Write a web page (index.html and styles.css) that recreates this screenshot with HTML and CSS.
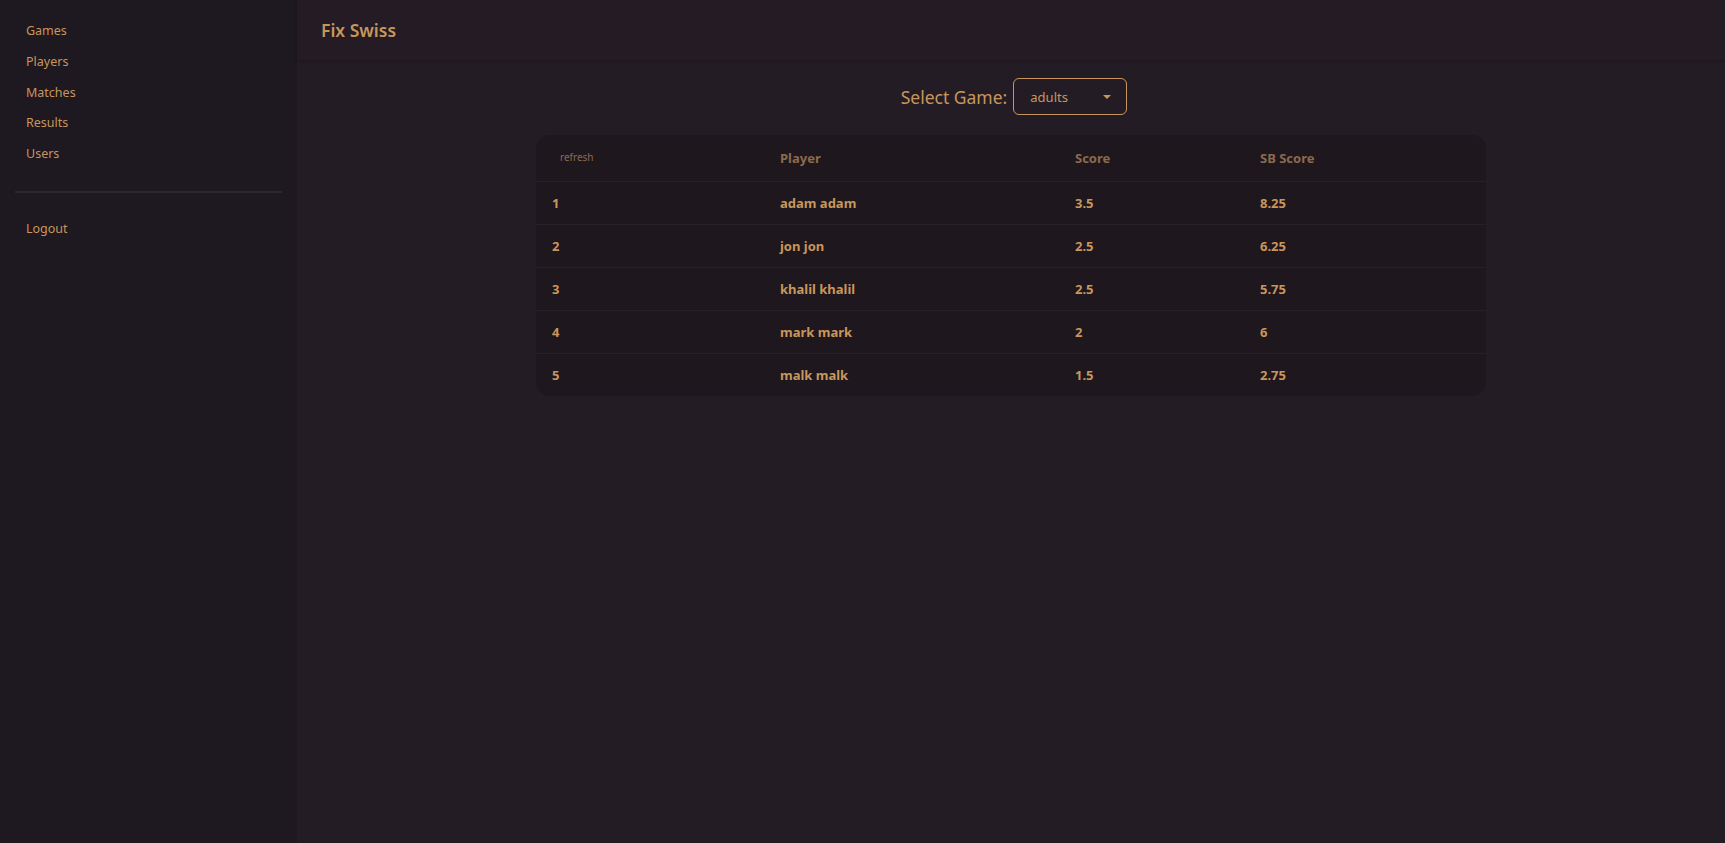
FILE: index.html
```html
<!DOCTYPE html>
<html>
<head>
<meta charset="utf-8">
<link rel="stylesheet" href="styles.css">
</head>
<body>
<div class="app">
  <aside class="sidebar">
    <nav class="nav">
      <a class="nav-item">Games</a>
      <a class="nav-item">Players</a>
      <a class="nav-item">Matches</a>
      <a class="nav-item">Results</a>
      <a class="nav-item">Users</a>
    </nav>
    <div class="divider"></div>
    <nav class="nav nav-bottom">
      <a class="nav-item">Logout</a>
    </nav>
  </aside>
  <main class="main">
    <header class="topbar"><h1 class="title">Fix Swiss</h1></header>
    <section class="content">
      <div class="select-row">
        <span class="select-label">Select Game:</span>
        <div class="select">
          <span>adults</span>
          <svg class="caret" width="8" height="4" viewBox="0 0 8 4"><path d="M0 0 L8 0 L4 4 Z" fill="#c8965c"/></svg>
        </div>
      </div>
      <div class="table-card">
        <table class="table">
          <thead>
            <tr><th class="c1"><span class="refresh">refresh</span></th><th class="c2">Player</th><th class="c3">Score</th><th class="c4">SB Score</th></tr>
          </thead>
          <tbody>
            <tr><td>1</td><td>adam adam</td><td>3.5</td><td>8.25</td></tr>
            <tr><td>2</td><td>jon jon</td><td>2.5</td><td>6.25</td></tr>
            <tr><td>3</td><td>khalil khalil</td><td>2.5</td><td>5.75</td></tr>
            <tr><td>4</td><td>mark mark</td><td>2</td><td>6</td></tr>
            <tr class="last"><td>5</td><td>malk malk</td><td>1.5</td><td>2.75</td></tr>
          </tbody>
        </table>
      </div>
    </section>
  </main>
</div>
</body>
</html>
```
FILE: styles.css
```css
* { box-sizing: border-box; }
html, body { margin: 0; height: 100%; }
body {
  background: #241c25;
  font-family: "Noto Sans", "Open Sans", sans-serif;
  color: #c8965c;
}
.app { display: flex; height: 843px; }
.sidebar {
  width: 297px;
  flex: none;
  background: #1e1820;
  padding-top: 16px;
}
.nav { display: flex; flex-direction: column; }
.nav-item {
  font-size: 12.5px;
  line-height: 30.8px;
  padding-left: 26px;
  color: #c8965c;
}
.divider {
  margin: 21px 15px 21px 15px;
  height: 2px;
  background: #2e262e;
}
.main { flex: 1; display: flex; flex-direction: column; }
.topbar {
  height: 60px;
  display: flex;
  align-items: center;
  padding-left: 24px;
  background: #241b25;
  box-shadow: 0 1px 3px rgba(0,0,0,0.25);
}
.title {
  margin: 0;
  font-size: 17.5px;
  font-weight: 600;
  color: #c8965c;
}
.content {
  display: flex;
  flex-direction: column;
  align-items: center;
  padding-top: 18px;
}
.select-row {
  display: flex;
  align-items: center;
  gap: 6px;
  height: 37px;
  margin-left: 6px;
}
.select-label { font-size: 17.5px; color: #c8965c; }
.select {
  width: 114px;
  height: 37px;
  border: 1px solid #c8965c;
  border-radius: 6px;
  display: flex;
  align-items: center;
  justify-content: space-between;
  padding: 0 15px 0 16px;
  font-size: 13px;
}
.caret { display: block; }
.table-card {
  margin-top: 20px;
  width: 950px;
  background: #1e171d;
  border-radius: 14px;
  overflow: hidden;
}
.table {
  width: 100%;
  border-collapse: collapse;
  table-layout: fixed;
}
th, td {
  text-align: left;
  padding: 0 0 0 16px;
  font-weight: 700;
  font-size: 13px;
}
th {
  height: 46px;
  color: #8b6a4d;
  border-bottom: 1px solid #272027;
}
td {
  height: 43px;
  color: #c8965c;
  border-bottom: 1px solid #272027;
}
tr.last td { border-bottom: none; }
.c1 { width: 228px; }
.c2 { width: 295px; }
.c3 { width: 185px; }
.c4 { width: 242px; }
.refresh {
  font-size: 10px;
  font-weight: 400;
  padding-left: 8px;
  position: relative;
  top: -2px;
}
```
